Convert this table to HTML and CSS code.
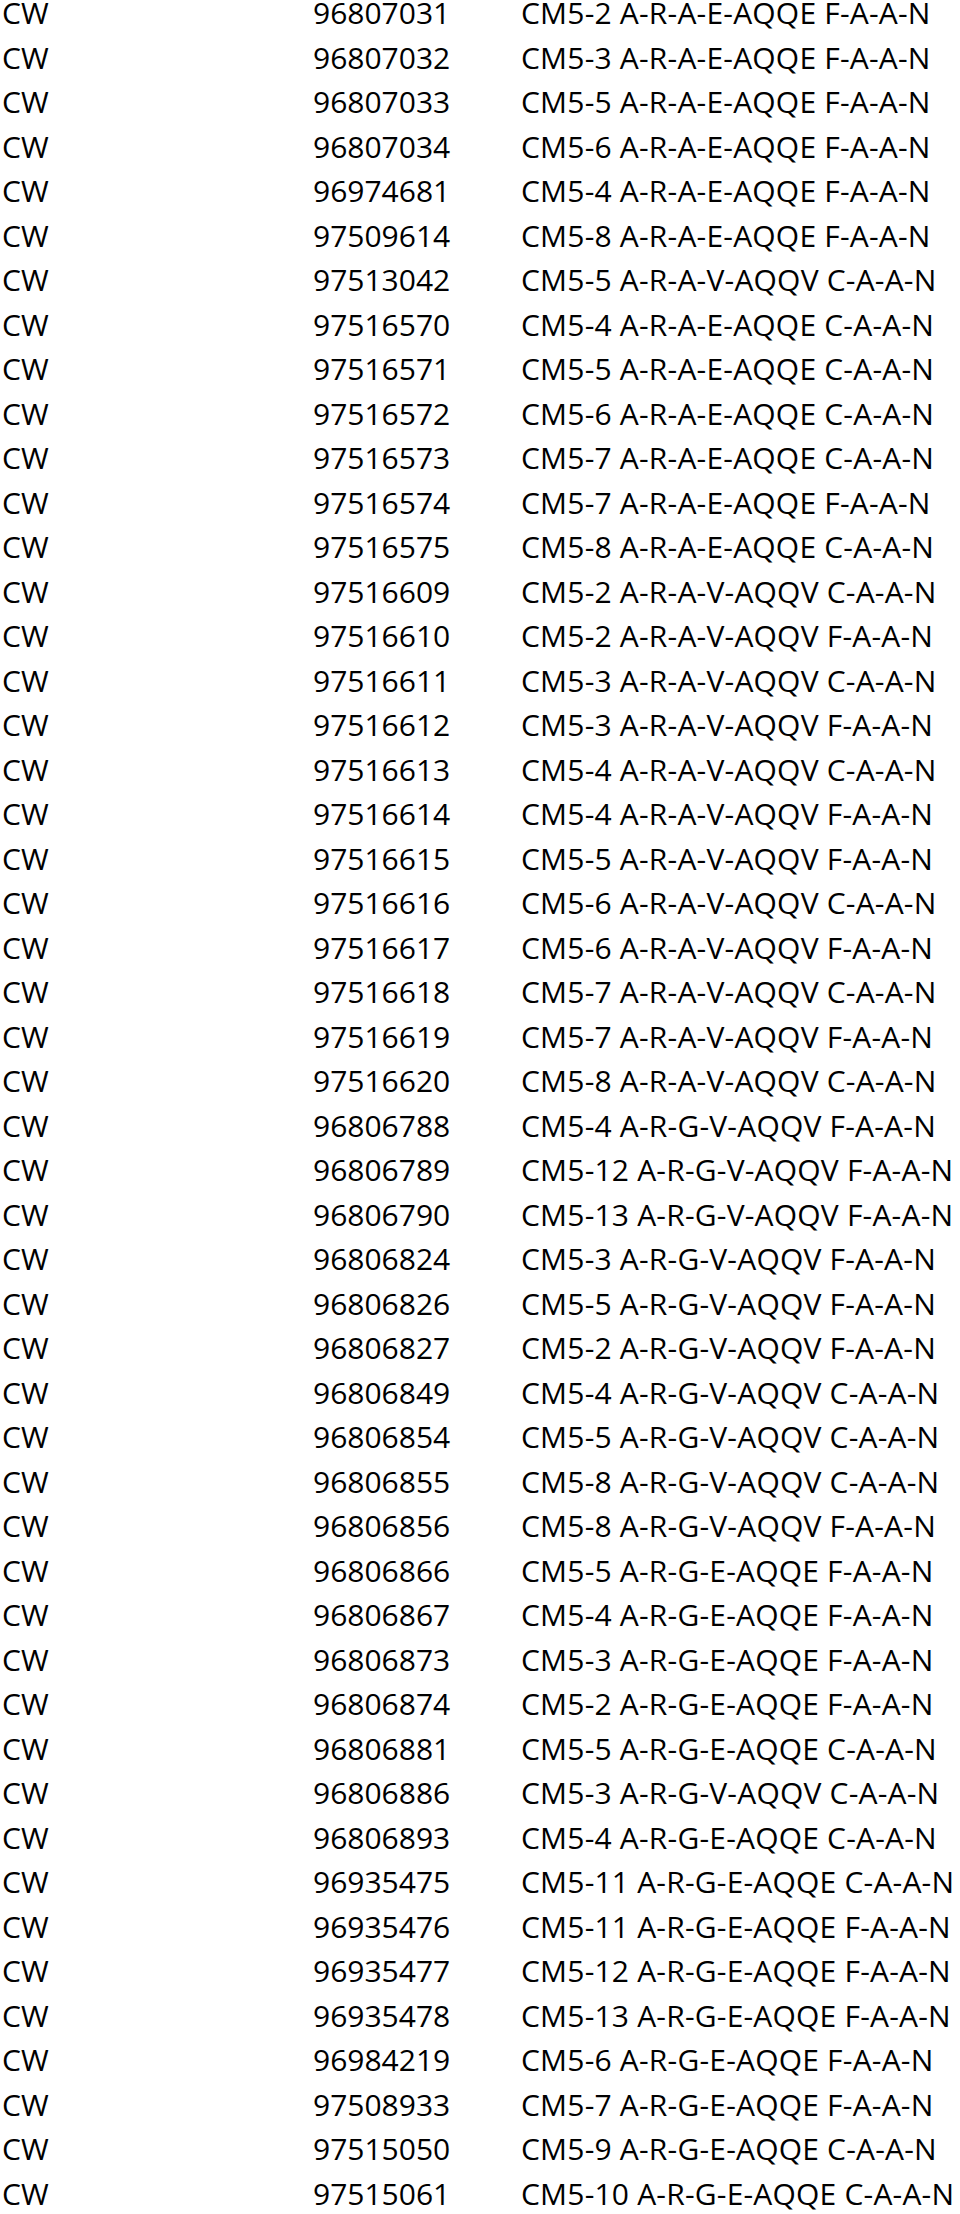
FILE: index.html
```html
<!DOCTYPE html>
<html lang="en">
<head>
<meta charset="utf-8">
<title>CW list</title>
<link rel="stylesheet" href="styles.css">
</head>
<body>
<div class="list">
<div class="row"><span>CW</span><span>96807031</span><span>CM5-2 A-R-A-E-AQQE F-A-A-N</span></div>
<div class="row"><span>CW</span><span>96807032</span><span>CM5-3 A-R-A-E-AQQE F-A-A-N</span></div>
<div class="row"><span>CW</span><span>96807033</span><span>CM5-5 A-R-A-E-AQQE F-A-A-N</span></div>
<div class="row"><span>CW</span><span>96807034</span><span>CM5-6 A-R-A-E-AQQE F-A-A-N</span></div>
<div class="row"><span>CW</span><span>96974681</span><span>CM5-4 A-R-A-E-AQQE F-A-A-N</span></div>
<div class="row"><span>CW</span><span>97509614</span><span>CM5-8 A-R-A-E-AQQE F-A-A-N</span></div>
<div class="row"><span>CW</span><span>97513042</span><span>CM5-5 A-R-A-V-AQQV C-A-A-N</span></div>
<div class="row"><span>CW</span><span>97516570</span><span>CM5-4 A-R-A-E-AQQE C-A-A-N</span></div>
<div class="row"><span>CW</span><span>97516571</span><span>CM5-5 A-R-A-E-AQQE C-A-A-N</span></div>
<div class="row"><span>CW</span><span>97516572</span><span>CM5-6 A-R-A-E-AQQE C-A-A-N</span></div>
<div class="row"><span>CW</span><span>97516573</span><span>CM5-7 A-R-A-E-AQQE C-A-A-N</span></div>
<div class="row"><span>CW</span><span>97516574</span><span>CM5-7 A-R-A-E-AQQE F-A-A-N</span></div>
<div class="row"><span>CW</span><span>97516575</span><span>CM5-8 A-R-A-E-AQQE C-A-A-N</span></div>
<div class="row"><span>CW</span><span>97516609</span><span>CM5-2 A-R-A-V-AQQV C-A-A-N</span></div>
<div class="row"><span>CW</span><span>97516610</span><span>CM5-2 A-R-A-V-AQQV F-A-A-N</span></div>
<div class="row"><span>CW</span><span>97516611</span><span>CM5-3 A-R-A-V-AQQV C-A-A-N</span></div>
<div class="row"><span>CW</span><span>97516612</span><span>CM5-3 A-R-A-V-AQQV F-A-A-N</span></div>
<div class="row"><span>CW</span><span>97516613</span><span>CM5-4 A-R-A-V-AQQV C-A-A-N</span></div>
<div class="row"><span>CW</span><span>97516614</span><span>CM5-4 A-R-A-V-AQQV F-A-A-N</span></div>
<div class="row"><span>CW</span><span>97516615</span><span>CM5-5 A-R-A-V-AQQV F-A-A-N</span></div>
<div class="row"><span>CW</span><span>97516616</span><span>CM5-6 A-R-A-V-AQQV C-A-A-N</span></div>
<div class="row"><span>CW</span><span>97516617</span><span>CM5-6 A-R-A-V-AQQV F-A-A-N</span></div>
<div class="row"><span>CW</span><span>97516618</span><span>CM5-7 A-R-A-V-AQQV C-A-A-N</span></div>
<div class="row"><span>CW</span><span>97516619</span><span>CM5-7 A-R-A-V-AQQV F-A-A-N</span></div>
<div class="row"><span>CW</span><span>97516620</span><span>CM5-8 A-R-A-V-AQQV C-A-A-N</span></div>
<div class="row"><span>CW</span><span>96806788</span><span>CM5-4 A-R-G-V-AQQV F-A-A-N</span></div>
<div class="row"><span>CW</span><span>96806789</span><span>CM5-12 A-R-G-V-AQQV F-A-A-N</span></div>
<div class="row"><span>CW</span><span>96806790</span><span>CM5-13 A-R-G-V-AQQV F-A-A-N</span></div>
<div class="row"><span>CW</span><span>96806824</span><span>CM5-3 A-R-G-V-AQQV F-A-A-N</span></div>
<div class="row"><span>CW</span><span>96806826</span><span>CM5-5 A-R-G-V-AQQV F-A-A-N</span></div>
<div class="row"><span>CW</span><span>96806827</span><span>CM5-2 A-R-G-V-AQQV F-A-A-N</span></div>
<div class="row"><span>CW</span><span>96806849</span><span>CM5-4 A-R-G-V-AQQV C-A-A-N</span></div>
<div class="row"><span>CW</span><span>96806854</span><span>CM5-5 A-R-G-V-AQQV C-A-A-N</span></div>
<div class="row"><span>CW</span><span>96806855</span><span>CM5-8 A-R-G-V-AQQV C-A-A-N</span></div>
<div class="row"><span>CW</span><span>96806856</span><span>CM5-8 A-R-G-V-AQQV F-A-A-N</span></div>
<div class="row"><span>CW</span><span>96806866</span><span>CM5-5 A-R-G-E-AQQE F-A-A-N</span></div>
<div class="row"><span>CW</span><span>96806867</span><span>CM5-4 A-R-G-E-AQQE F-A-A-N</span></div>
<div class="row"><span>CW</span><span>96806873</span><span>CM5-3 A-R-G-E-AQQE F-A-A-N</span></div>
<div class="row"><span>CW</span><span>96806874</span><span>CM5-2 A-R-G-E-AQQE F-A-A-N</span></div>
<div class="row"><span>CW</span><span>96806881</span><span>CM5-5 A-R-G-E-AQQE C-A-A-N</span></div>
<div class="row"><span>CW</span><span>96806886</span><span>CM5-3 A-R-G-V-AQQV C-A-A-N</span></div>
<div class="row"><span>CW</span><span>96806893</span><span>CM5-4 A-R-G-E-AQQE C-A-A-N</span></div>
<div class="row"><span>CW</span><span>96935475</span><span>CM5-11 A-R-G-E-AQQE C-A-A-N</span></div>
<div class="row"><span>CW</span><span>96935476</span><span>CM5-11 A-R-G-E-AQQE F-A-A-N</span></div>
<div class="row"><span>CW</span><span>96935477</span><span>CM5-12 A-R-G-E-AQQE F-A-A-N</span></div>
<div class="row"><span>CW</span><span>96935478</span><span>CM5-13 A-R-G-E-AQQE F-A-A-N</span></div>
<div class="row"><span>CW</span><span>96984219</span><span>CM5-6 A-R-G-E-AQQE F-A-A-N</span></div>
<div class="row"><span>CW</span><span>97508933</span><span>CM5-7 A-R-G-E-AQQE F-A-A-N</span></div>
<div class="row"><span>CW</span><span>97515050</span><span>CM5-9 A-R-G-E-AQQE C-A-A-N</span></div>
<div class="row"><span>CW</span><span>97515061</span><span>CM5-10 A-R-G-E-AQQE C-A-A-N</span></div>
</div>
</body>
</html>
```
FILE: styles.css
```css
html, body {
  margin: 0;
  padding: 0;
  background: #ffffff;
}

body {
  font-family: "Open Sans", "Liberation Sans", sans-serif;
  font-size: 30px;
  color: #000000;
  overflow: hidden;
}

.list {
  padding-left: 2px;
}

.row {
  display: grid;
  grid-template-columns: 311px 208px auto;
  align-items: start;
  line-height: 25px;
  height: 44.5px;
  white-space: nowrap;
}

.row span:last-child {
  letter-spacing: 0.2px;
}
```
